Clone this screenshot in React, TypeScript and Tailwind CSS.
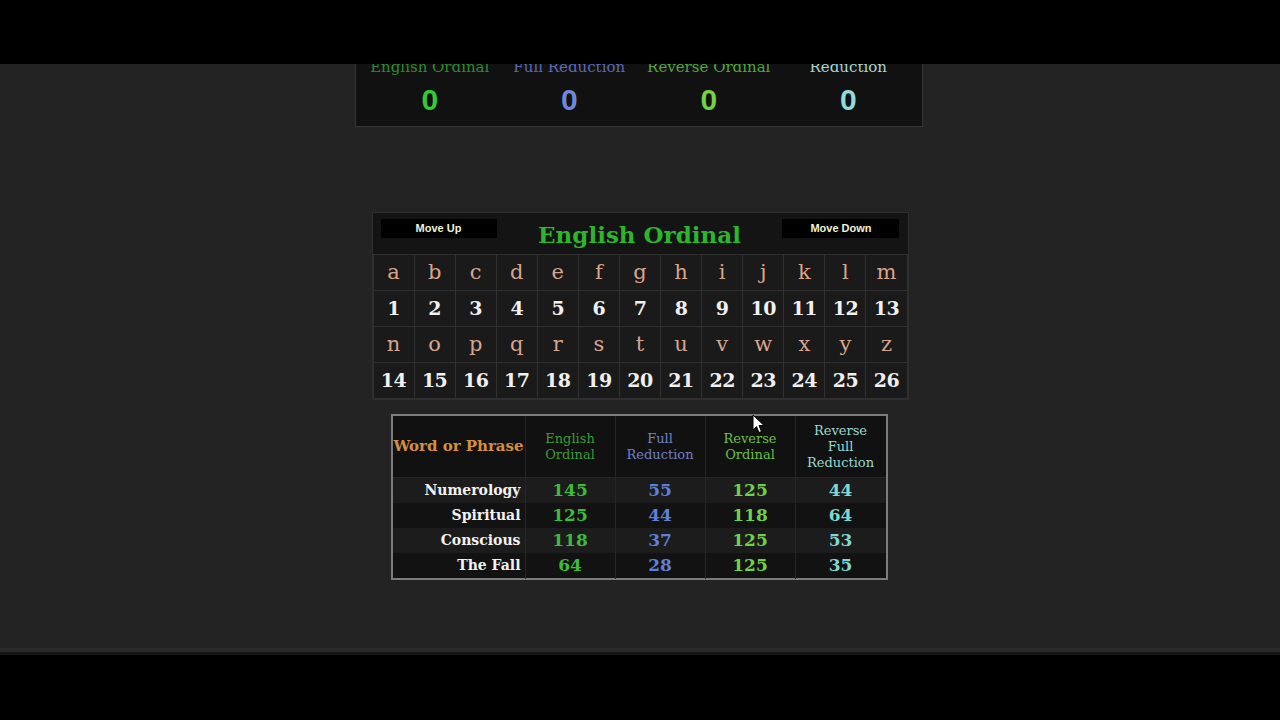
import React from "react";

const serif = "font-['DejaVu_Serif','Liberation_Serif',serif]";
const sans = "font-['Liberation_Sans','DejaVu_Sans',sans-serif]";

const totals = [
  { label: ["English Ordinal"], labelCls: "text-[#2f8a2f]", valCls: "text-[#36c936]" },
  { label: ["Full Reduction"], labelCls: "text-[#5a6ab8]", valCls: "text-[#6f88dc]" },
  { label: ["Reverse Ordinal"], labelCls: "text-[#4fa83a]", valCls: "text-[#72d244]" },
  { label: ["Reverse Full", "Reduction"], labelCls: "text-[#a6d6d0]", valCls: "text-[#8fdcd8]" },
];

const letters1 = "abcdefghijklm".split("");
const letters2 = "nopqrstuvwxyz".split("");

const rows = [
  { word: "Numerology", v: [145, 55, 125, 44] },
  { word: "Spiritual", v: [125, 44, 118, 64] },
  { word: "Conscious", v: [118, 37, 125, 53] },
  { word: "The Fall", v: [64, 28, 125, 35] },
];

const numCls = ["text-[#3cba3c]", "text-[#5f7fd8]", "text-[#6fd04a]", "text-[#7fd8d0]"];

function Cell({ children, letter }: { children: React.ReactNode; letter?: boolean }) {
  return (
    <div
      className={`flex h-[35px] items-center justify-center bg-[#1a1a1a] ${
        letter ? "text-[21px] text-[#d9a58a]" : "text-[19px] font-bold tracking-[-0.5px] text-[#f0f0f0]"
      }`}
    >
      {children}
    </div>
  );
}

function Cursor() {
  return (
    <svg className="absolute left-[752px] top-[350px]" width="13" height="20" viewBox="0 0 13 20">
      <path d="M1 1 L1 16 L4.5 12.5 L7 18.5 L9.5 17.5 L7 11.5 L12 11.5 Z" fill="#fff" stroke="#000" strokeWidth="1" />
    </svg>
  );
}

export default function App() {
  return (
    <div className="flex h-[720px] w-[1280px] flex-col overflow-hidden bg-black">
      <div className="h-[64px] shrink-0 bg-black" />
      <div className={`relative h-[584px] shrink-0 overflow-hidden bg-[#232323] ${serif}`}>
        {/* totals panel, top cut off by the bar */}
        <div className="mx-auto -mt-[33px] w-[568px] -translate-x-[1px] border border-[#343434] bg-[#111111] px-[4px] pb-[9px] pt-[8px]">
          <div className="grid grid-cols-4">
            {totals.map((t, i) => (
              <div key={i} className="flex flex-col items-center">
                <div className={`flex h-[36px] flex-col items-center justify-end text-[15px] leading-[18px] ${t.labelCls}`}>
                  {t.label.map((l) => (
                    <span key={l}>{l}</span>
                  ))}
                </div>
                <div className={`mt-[7px] text-[30px] font-bold leading-[34px] ${sans} ${t.valCls}`}>0</div>
              </div>
            ))}
          </div>
        </div>

        {/* cipher chart */}
        <div className="mx-auto mt-[85px] w-[537px] border border-[#2e2e2e] bg-[#141414]">
          <div className="flex h-[41px] items-start justify-between px-[8px] pt-[6px]">
            <button className={`h-[19px] w-[116px] bg-black text-[11px] font-bold text-[#eef3d6] ${sans}`}>Move Up</button>
            <div className="mt-[1px] text-[23px] font-bold leading-[30px] text-[#2db52d]">English Ordinal</div>
            <button className={`h-[19px] w-[117px] bg-black text-[11px] font-bold text-[#eef3d6] ${sans}`}>Move Down</button>
          </div>
          <div className="grid grid-cols-[repeat(13,minmax(0,1fr))] gap-px bg-[#303030] p-px">
            {letters1.map((l) => (
              <Cell key={l} letter>
                {l}
              </Cell>
            ))}
            {letters1.map((_, i) => (
              <Cell key={"a" + i}>{i + 1}</Cell>
            ))}
            {letters2.map((l) => (
              <Cell key={l} letter>
                {l}
              </Cell>
            ))}
            {letters2.map((_, i) => (
              <Cell key={"b" + i}>{i + 14}</Cell>
            ))}
          </div>
        </div>

        {/* results table */}
        <div className="mx-auto mt-[14px] w-[497px] -translate-x-[1px] border-2 border-[#7c7c7c] bg-[#111111]">
          <div className="grid h-[62px] grid-cols-[133px_repeat(4,minmax(0,1fr))] divide-x divide-[#262626] border-b border-[#262626]">
            <div className="flex items-center justify-center text-[15px] font-bold text-[#d4903c]">Word or Phrase</div>
            <div className="flex items-center justify-center text-center text-[13px] leading-[16px] text-[#3a9a3a]">
              English
              <br />
              Ordinal
            </div>
            <div className="flex items-center justify-center text-center text-[13px] leading-[16px] text-[#7080c8]">
              Full
              <br />
              Reduction
            </div>
            <div className="flex items-center justify-center text-center text-[13px] leading-[16px] text-[#6ac040]">
              Reverse
              <br />
              Ordinal
            </div>
            <div className="flex items-center justify-center text-center text-[13px] leading-[16px] text-[#9ad8d0]">
              Reverse
              <br />
              Full
              <br />
              Reduction
            </div>
          </div>
          {rows.map((r, i) => (
            <div
              key={r.word}
              className={`grid h-[25px] grid-cols-[133px_repeat(4,minmax(0,1fr))] divide-x divide-[#262626] ${
                i % 2 === 0 ? "bg-[#1c1c1c]" : "bg-[#121212]"
              }`}
            >
              <div className="flex items-center justify-end pr-[4px] text-[14px] font-bold text-[#f2f2f2]">{r.word}</div>
              {r.v.map((n, j) => (
                <div key={j} className={`flex items-center justify-center text-[17px] font-bold ${numCls[j]}`}>
                  {n}
                </div>
              ))}
            </div>
          ))}
        </div>

        <Cursor />
      </div>
      <div className="h-[4px] shrink-0 bg-[#2a2a2a]" />
      <div className="h-[3px] shrink-0 bg-[#151515]" />
      <div className="flex-1 bg-black" />
    </div>
  );
}
